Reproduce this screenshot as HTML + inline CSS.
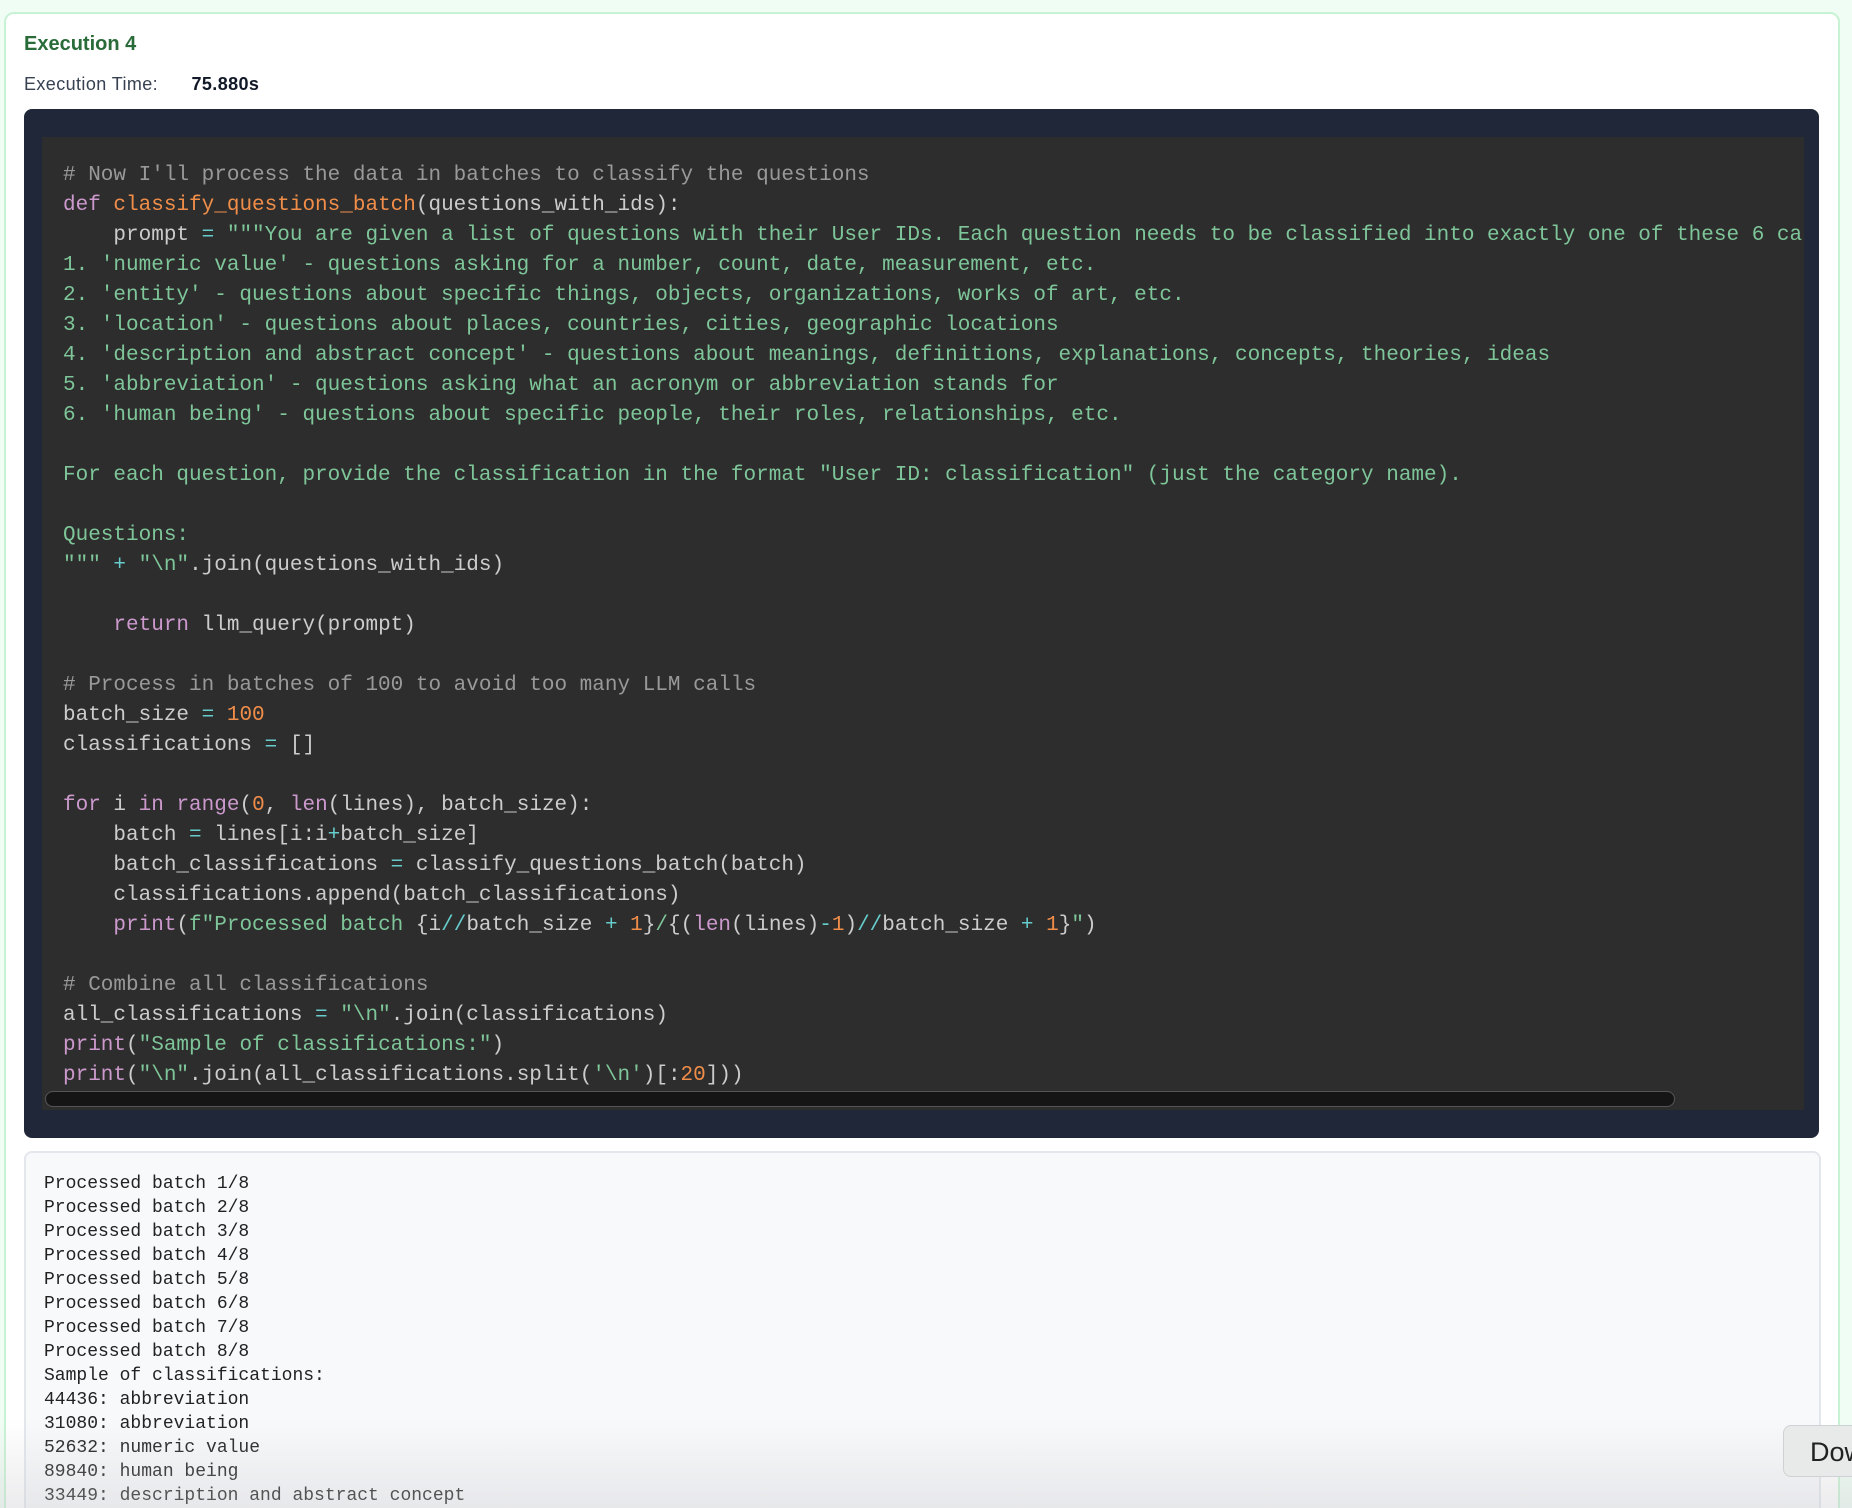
<!DOCTYPE html>
<html><head><meta charset="utf-8"><style>
html,body{margin:0;padding:0;width:1852px;height:1508px;overflow:hidden;}
body{background:#f0fdf4;position:relative;font-family:"Liberation Sans",sans-serif;}
.card{position:absolute;left:4px;top:12px;width:1832px;height:1520px;background:#fff;border:2px solid #c8f2d4;border-radius:10px;}
.title{position:absolute;left:24px;top:33px;font-size:20px;font-weight:bold;color:#2a6b3a;}
.et{position:absolute;left:24px;top:74px;font-size:18px;color:#374151;letter-spacing:0.4px;}
.et b{color:#111827;margin-left:28px;}
.dark{position:absolute;left:24px;top:109px;width:1795px;height:1029px;background:#1f2738;border-radius:8px;}
.code{position:absolute;left:42px;top:137px;width:1762px;height:973px;background:#2d2d2d;overflow:hidden;}
pre{margin:0;position:absolute;left:21px;top:24px;font-family:"Liberation Mono",monospace;font-size:21px;line-height:30px;color:#ccc;white-space:pre;}
.c{color:#999}.k{color:#cc99cd}.f{color:#f08d49}.s{color:#7ec699}.o{color:#67cdcc}.n{color:#f08d49}
.sb{position:absolute;left:45px;top:1091px;width:1628px;height:14px;background:#151515;border:1px solid #555;border-radius:8px;}
.out{position:absolute;left:24px;top:1151px;width:1793px;height:380px;background:#f8f9fb;border:2px solid #e3e7ec;border-radius:8px;}
.out pre{left:18px;top:19px;font-size:18px;line-height:24px;color:#222;}
.fade{position:absolute;left:0;top:1420px;width:1852px;height:88px;background:linear-gradient(to bottom,rgba(200,200,205,0),rgba(200,200,205,0.35));}
.btn{position:absolute;left:1783px;top:1425px;width:100px;height:52px;background:#e8eaea;border:1px solid #cfd2d4;border-radius:8px;font-size:27px;color:#222;line-height:52px;padding-left:26px;box-sizing:border-box;}
</style></head><body>
<div class="card"></div>
<div class="title">Execution 4</div>
<div class="et">Execution Time: <b>75.880s</b></div>
<div class="dark"></div>
<div class="code"><pre><span class="c"># Now I'll process the data in batches to classify the questions</span>
<span class="k">def</span> <span class="f">classify_questions_batch</span>(questions_with_ids):
    prompt <span class="o">=</span> <span class="s">"""You are given a list of questions with their User IDs. Each question needs to be classified into exactly one of these 6 categories:
1. 'numeric value' - questions asking for a number, count, date, measurement, etc.
2. 'entity' - questions about specific things, objects, organizations, works of art, etc.
3. 'location' - questions about places, countries, cities, geographic locations
4. 'description and abstract concept' - questions about meanings, definitions, explanations, concepts, theories, ideas
5. 'abbreviation' - questions asking what an acronym or abbreviation stands for
6. 'human being' - questions about specific people, their roles, relationships, etc.

For each question, provide the classification in the format "User ID: classification" (just the category name).

Questions:
"""</span> <span class="o">+</span> <span class="s">"\n"</span>.join(questions_with_ids)

    <span class="k">return</span> llm_query(prompt)

<span class="c"># Process in batches of 100 to avoid too many LLM calls</span>
batch_size <span class="o">=</span> <span class="n">100</span>
classifications <span class="o">=</span> []

<span class="k">for</span> i <span class="k">in</span> <span class="k">range</span>(<span class="n">0</span>, <span class="k">len</span>(lines), batch_size):
    batch <span class="o">=</span> lines[i:i<span class="o">+</span>batch_size]
    batch_classifications <span class="o">=</span> classify_questions_batch(batch)
    classifications.append(batch_classifications)
    <span class="k">print</span>(<span class="s">f"Processed batch </span>{i<span class="o">//</span>batch_size <span class="o">+</span> <span class="n">1</span>}<span class="s">/</span>{(<span class="k">len</span>(lines)<span class="o">-</span><span class="n">1</span>)<span class="o">//</span>batch_size <span class="o">+</span> <span class="n">1</span>}<span class="s">"</span>)

<span class="c"># Combine all classifications</span>
all_classifications <span class="o">=</span> <span class="s">"\n"</span>.join(classifications)
<span class="k">print</span>(<span class="s">"Sample of classifications:"</span>)
<span class="k">print</span>(<span class="s">"\n"</span>.join(all_classifications.split(<span class="s">'\n'</span>)[:<span class="n">20</span>]))</pre></div>
<div class="sb"></div>
<div class="out"><pre>Processed batch 1/8
Processed batch 2/8
Processed batch 3/8
Processed batch 4/8
Processed batch 5/8
Processed batch 6/8
Processed batch 7/8
Processed batch 8/8
Sample of classifications:
44436: abbreviation
31080: abbreviation
52632: numeric value
89840: human being
33449: description and abstract concept</pre></div>
<div class="fade"></div>
<div class="btn">Dow</div>
</body></html>
